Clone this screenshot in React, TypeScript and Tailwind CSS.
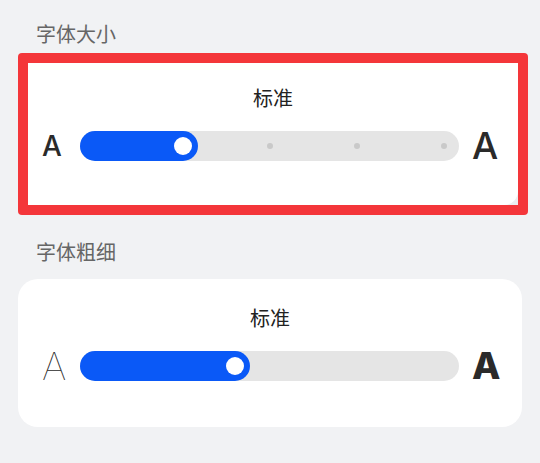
import React from 'react';

const cjk = "font-['Noto_Sans_CJK_SC','Noto_Sans',sans-serif]";
const latin = "font-['Inter','Noto_Sans',sans-serif]";

type SliderRowProps = {
  fillClass: string;
  leftClass: string;
  showDots?: boolean;
  leftA: React.ReactNode;
  rightA: React.ReactNode;
};

function SliderRow({ fillClass, leftClass, showDots, leftA, rightA }: SliderRowProps) {
  return (
    <div className="flex items-center h-[30px]">
      <div className={`flex items-center ${leftClass}`}>{leftA}</div>
      {/* track */}
      <div className="relative w-[379px] h-[30px] rounded-full bg-[#e5e5e5]">
        {showDots && (
          <div className="absolute inset-y-0 left-[187px] flex items-center gap-[81px]">
            <span className="w-[6px] h-[6px] rounded-full bg-[#c9c9c9]" />
            <span className="w-[6px] h-[6px] rounded-full bg-[#c9c9c9]" />
            <span className="w-[6px] h-[6px] rounded-full bg-[#c9c9c9]" />
          </div>
        )}
        <div
          className={`absolute left-0 top-0 h-[30px] rounded-full bg-[#0a59f7] flex items-center justify-end pr-[6px] ${fillClass}`}
        >
          <span className="w-[18px] h-[18px] rounded-full bg-white" />
        </div>
      </div>
      <div className="ml-[13px] flex items-center">{rightA}</div>
    </div>
  );
}

export default function App() {
  return (
    <div className="w-[540px] h-[463px] bg-[#f1f2f4] pt-[20px] px-[18px] overflow-hidden">
      {/* 字体大小 */}
      <div className={`pl-[18px] h-[28px] text-[20px] leading-[28px] text-[#666666] ${cjk}`}>字体大小</div>
      <div className="mt-[5px] w-[510px] rounded-[4px] bg-[#f4363a] p-[10px]">
        <div className="bg-[#eceef0]">
          <div className="bg-white rounded-br-[14px] pt-[21px] pb-[44px]">
            <div className={`text-center text-[20px] leading-[28px] text-[#222222] ${cjk}`}>标准</div>
            <div className="mt-[19px]">
              <SliderRow
                fillClass="w-[118px]"
                leftClass="w-[52px] pl-[14px]"
                showDots
                leftA={<span className={`text-[28px] leading-[30px] font-medium text-[#2a2a2a] ${latin}`}>A</span>}
                rightA={<span className={`text-[37px] leading-[30px] font-medium text-[#2a2a2a] ${latin}`}>A</span>}
              />
            </div>
          </div>
        </div>
      </div>

      {/* 字体粗细 */}
      <div className={`mt-[23px] pl-[18px] h-[28px] text-[20px] leading-[28px] text-[#666666] ${cjk}`}>字体粗细</div>
      <div className="mt-[13px] w-[504px] rounded-[20px] bg-white pt-[25px] pb-[46px]">
        <div className={`text-center text-[20px] leading-[28px] text-[#222222] ${cjk}`}>标准</div>
        <div className="mt-[19px]">
          <SliderRow
            fillClass="w-[170px]"
            leftClass="w-[62px] pl-[24px]"
            leftA={<span className={`text-[38px] leading-[30px] font-thin text-[#2a2a2a] ${latin}`}>A</span>}
            rightA={<span className={`text-[37px] leading-[30px] font-extrabold text-[#2a2a2a] ${latin}`}>A</span>}
          />
        </div>
      </div>
    </div>
  );
}
